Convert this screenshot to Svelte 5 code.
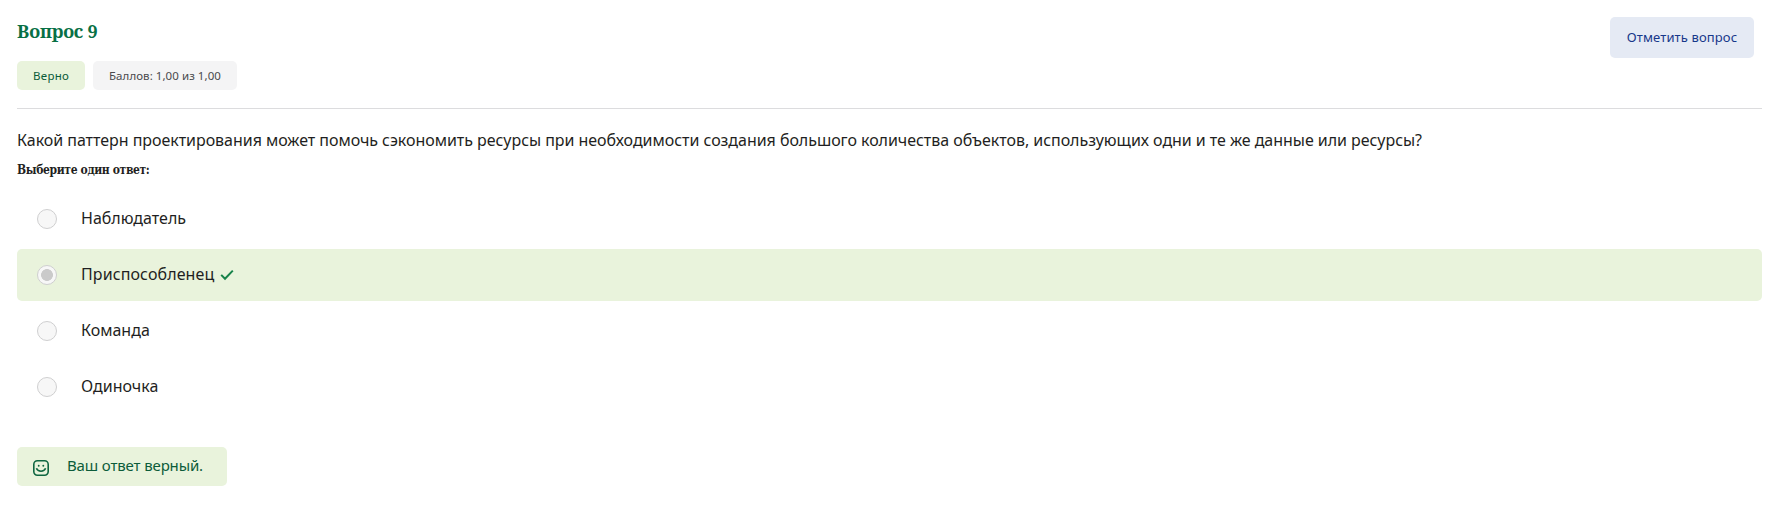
<script>
  const answers = [
    { text: 'Наблюдатель' },
    { text: 'Приспособленец', selected: true },
    { text: 'Команда' },
    { text: 'Одиночка' }
  ];
</script>

<main>
  <header>
    <div class="info">
      <h3>Вопрос 9</h3>
      <div class="badges">
        <div class="badge correct">Верно</div>
        <div class="badge grade">Баллов: 1,00 из 1,00</div>
      </div>
    </div>
    <button>Отметить вопрос</button>
  </header>

  <p class="question">Какой паттерн проектирования может помочь сэкономить ресурсы при необходимости создания большого количества объектов, использующих одни и те же данные или ресурсы?</p>
  <p class="prompt">Выберите один ответ:</p>

  <div class="answers">
    {#each answers as a}
      <div class="answer" class:selected={a.selected}>
        <i class="radio"></i>
        <span>{a.text}</span>
        {#if a.selected}
          <svg class="check" width="14" height="12" viewBox="0 0 14 12"><path d="M1.2 5.9 5 9.7 12.8 1.6" /></svg>
        {/if}
      </div>
    {/each}
  </div>

  <div class="feedback">
    <svg width="16" height="16" viewBox="0 0 16 16">
      <rect x=".8" y=".8" width="14.4" height="14.4" rx="3.6" />
      <path d="M3.4 8.3C5 12.2 11 12.2 12.6 8.3" />
      <circle cx="5.7" cy="5.8" r=".95" /><circle cx="10.3" cy="5.8" r=".95" />
    </svg>
    <span>Ваш ответ верный.</span>
  </div>
</main>

<style>
  :global(body) { margin: 0; background: #fff; }
  main {
    box-sizing: border-box;
    width: 1785px;
    height: 514px;
    padding: 17px 23px 0 17px;
    font-family: "Noto Sans", sans-serif;
    color: #1f1f22;
    white-space: nowrap;
    overflow: hidden;
  }
  header {
    display: flex;
    justify-content: space-between;
    align-items: flex-start;
    box-sizing: border-box;
    height: 92px;
    padding-right: 8px;
    border-bottom: 1px solid #dcdcde;
  }
  h3 {
    margin: 0;
    height: 44px;
    font: 700 18px/29px "Noto Serif", "DejaVu Serif Condensed", "DejaVu Serif", serif;
    letter-spacing: -0.2px;
    color: #087045;
  }
  .badges { display: flex; gap: 8px; }
  .badge {
    box-sizing: border-box;
    height: 29px;
    padding-left: 16px;
    border-radius: 5px;
    font-size: 11.5px;
    line-height: 29px;
  }
  .correct { width: 68px; background: #e9f3dc; color: #0c5c3a; letter-spacing: 0.3px; }
  .grade { width: 144px; background: #f4f4f5; color: #4a4a4d; letter-spacing: 0.06px; }
  button {
    width: 144px;
    height: 41px;
    padding: 0;
    border: 0;
    border-radius: 5px;
    background: #e5eaf4;
    color: #17388a;
    font: 13px/41px "Noto Sans", sans-serif;
    letter-spacing: 0.12px;
    white-space: nowrap;
  }
  p { margin: 0; }
  .question { margin-top: 18px; height: 27px; font-size: 16px; line-height: 26px; letter-spacing: -0.04px; }
  .prompt {
    margin-top: 5px;
    height: 22px;
    font: 700 12px/22px "DejaVu Serif Condensed", "DejaVu Serif", serif;
    letter-spacing: -0.37px;
  }
  .answers { display: flex; flex-direction: column; gap: 4px; margin-top: 12px; }
  .answer {
    display: flex;
    align-items: center;
    box-sizing: border-box;
    height: 52px;
    padding-left: 20px;
    border-radius: 5px;
    font-size: 16px;
    line-height: 24px;
  }
  .answer span { margin-bottom: 2px; }
  .selected { background: #e9f3dc; letter-spacing: 0.1px; }
  .radio {
    box-sizing: border-box;
    width: 20px;
    height: 20px;
    margin-right: 24px;
    border: 1px solid #cfcfd0;
    border-radius: 50%;
    background: #f7f7f7;
  }
  .selected .radio { background: radial-gradient(circle, #cacaca 5.6px, #f7f7f7 6.2px); }
  svg { fill: none; stroke: #17834a; }
  .check { margin-left: 6px; stroke-width: 2; }
  .feedback {
    display: flex;
    align-items: center;
    box-sizing: border-box;
    width: 210px;
    height: 39px;
    margin-top: 34px;
    padding-left: 16px;
    border-radius: 5px;
    background: #e9f3dc;
    color: #0c5c3a;
    font-size: 15px;
    line-height: 22px;
    letter-spacing: -0.14px;
  }
  .feedback span { margin-bottom: 3px; }
  .feedback svg { margin: 3px 18px 0 0; stroke: #0f6641; stroke-width: 1.6; }
  .feedback circle { fill: #0f6641; stroke: none; }
</style>
